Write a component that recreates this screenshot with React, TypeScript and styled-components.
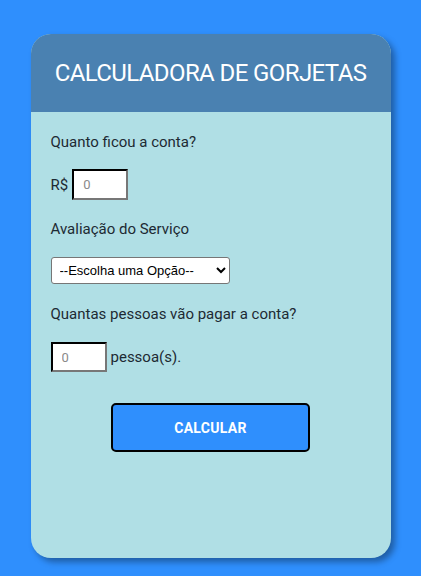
import React from "react";
import styled, { createGlobalStyle } from "styled-components";

const Global = createGlobalStyle`
  html, body { margin: 0; padding: 0; }
  body {
    background: #2f8ffd;
    font-family: "Open Sans", "Noto Sans", sans-serif;
    width: 421px;
    height: 576px;
    overflow: hidden;
  }
`;

const Page = styled.div`
  display: flex;
  justify-content: center;
  padding-top: 34px;
`;

const Card = styled.div`
  width: 360px;
  height: 524px;
  border-radius: 20px;
  overflow: hidden;
  background: #b0dfe5;
  box-shadow: 4px 4px 6px rgba(0, 0, 0, 0.35);
  display: flex;
  flex-direction: column;
`;

const Header = styled.header`
  height: 78px;
  background: #4a81b1;
  display: flex;
  align-items: center;
  justify-content: center;
  color: #ffffff;
  font-family: "Roboto", "Open Sans", sans-serif;
  font-size: 24px;
  font-weight: 400;
  letter-spacing: -0.6px;
`;

const Body = styled.div`
  padding: 20px 20px;
  display: flex;
  flex-direction: column;
`;

const Label = styled.p<{ $top: number }>`
  margin: ${(p) => p.$top}px 0 0;
  font-family: "Roboto", "Open Sans", sans-serif;
  font-size: 15px;
  line-height: 20px;
  color: #1d2a33;
`;

const Row = styled.div<{ $top: number }>`
  margin-top: ${(p) => p.$top}px;
  display: flex;
  align-items: center;
  gap: 4px;
  font-family: "Roboto", "Open Sans", sans-serif;
  font-size: 15px;
  color: #1d2a33;
`;

const NumInput = styled.input<{ $h: number }>`
  box-sizing: border-box;
  width: 56px;
  height: ${(p) => p.$h}px;
  border: 2px inset #767676;
  border-color: #333 #777 #777 #333;
  background: #fff;
  padding: 0 0 0 9px;
  font-family: "Roboto", sans-serif;
  font-size: 13px;
  &::placeholder { color: #8a8a8a; }
`;

const Select = styled.select`
  margin-top: 18px;
  box-sizing: border-box;
  width: 179px;
  height: 27px;
  border: 1px solid #767676;
  border-radius: 3px;
  background: #fff;
  font-family: "Liberation Sans", Arial, sans-serif;
  font-size: 13px;
  color: #000;
  padding: 0 4px;
`;

const Button = styled.button`
  align-self: center;
  margin-top: 31px;
  width: 199px;
  height: 49px;
  border: 2px solid #000;
  border-radius: 5px;
  background: #2f8ffd;
  color: #fff;
  font-family: "Roboto", sans-serif;
  font-weight: 700;
  font-size: 14px;
  letter-spacing: 0.3px;
`;

export default function App() {
  return (
    <>
      <Global />
      <Page>
        <Card>
          <Header>CALCULADORA DE GORJETAS</Header>
          <Body>
            <Label $top={0}>Quanto ficou a conta?</Label>
            <Row $top={17}>
              R$ <NumInput $h={31} placeholder="0" />
            </Row>
            <Label $top={19}>Avaliação do Serviço</Label>
            <Select defaultValue="">
              <option value="">--Escolha uma Opção--</option>
            </Select>
            <Label $top={20}>Quantas pessoas vão pagar a conta?</Label>
            <Row $top={18}>
              <NumInput $h={30} placeholder="0" />
              pessoa(s).
            </Row>
            <Button>CALCULAR</Button>
          </Body>
        </Card>
      </Page>
    </>
  );
}
